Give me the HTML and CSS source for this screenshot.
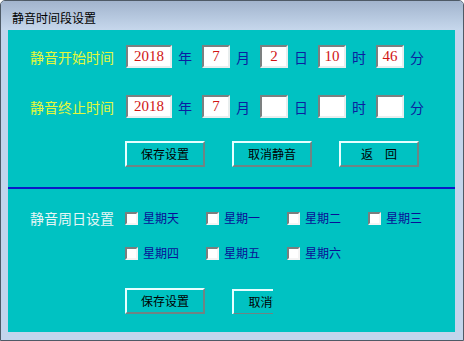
FILE: index.html
```html
<!DOCTYPE html>
<html lang="zh-CN">
<head>
<meta charset="utf-8">
<title>静音时间段设置</title>
<link rel="stylesheet" href="styles.css">
</head>
<body>
<div class="window">
  <div class="titlebar">静音时间段设置</div>
  <div class="client">
    <div class="time-row">
      <span class="label label-start">静音开始时间</span>
      <input class="field field-year" type="text" value="2018"><span class="unit">年</span>
      <input class="field" type="text" value="7"><span class="unit">月</span>
      <input class="field" type="text" value="2"><span class="unit">日</span>
      <input class="field" type="text" value="10"><span class="unit">时</span>
      <input class="field" type="text" value="46"><span class="unit">分</span>
    </div>
    <div class="time-row">
      <span class="label label-start">静音终止时间</span>
      <input class="field field-year" type="text" value="2018"><span class="unit">年</span>
      <input class="field" type="text" value="7"><span class="unit">月</span>
      <input class="field" type="text" value=""><span class="unit">日</span>
      <input class="field" type="text" value=""><span class="unit">时</span>
      <input class="field" type="text" value=""><span class="unit">分</span>
    </div>
    <div class="btn-row">
      <button class="btn">保存设置</button>
      <button class="btn">取消静音</button>
      <button class="btn">返　回</button>
    </div>
    <div class="divider"></div>
    <div class="week">
      <span class="label label-week">静音周日设置</span>
      <label class="day"><input type="checkbox" class="check"><span>星期天</span></label>
      <label class="day"><input type="checkbox" class="check"><span>星期一</span></label>
      <label class="day"><input type="checkbox" class="check"><span>星期二</span></label>
      <label class="day"><input type="checkbox" class="check"><span>星期三</span></label>
      <label class="day day-first"><input type="checkbox" class="check"><span>星期四</span></label>
      <label class="day"><input type="checkbox" class="check"><span>星期五</span></label>
      <label class="day"><input type="checkbox" class="check"><span>星期六</span></label>
    </div>
    <div class="btn-row btn-row-bottom">
      <button class="btn">保存设置</button>
      <div class="clip"><button class="btn">取消静音</button></div>
    </div>
  </div>
</div>
</body>
</html>
```

FILE: styles.css
```css
html, body {
  margin: 0;
  padding: 0;
  background: #ffffff;
}

body {
  font-family: "Noto Sans CJK SC", "Noto Sans", sans-serif;
}

.window {
  width: 464px;
  height: 341px;
  box-sizing: border-box;
  border: 1px solid #4e5a66;
  border-radius: 5px 5px 0 0;
  background: #c3d5ec;
  overflow: hidden;
  display: flex;
  flex-direction: column;
}

.titlebar {
  height: 29px;
  box-sizing: border-box;
  padding: 10px 0 0 11px;
  font-size: 12px;
  line-height: 14px;
  color: #000000;
  background: linear-gradient(to bottom, #a2b4cd 0%, #b4c6dd 50%, #c6d7ec 100%);
}

.client {
  margin: 0 8px 0 7px;
  height: 302px;
  background: #00c2c2;
  display: flex;
  flex-direction: column;
  padding-top: 15px;
  box-sizing: border-box;
}

.time-row {
  display: flex;
  align-items: center;
  height: 23px;
  padding-left: 22px;
}

.time-row + .time-row {
  margin-top: 27px;
}

.label {
  width: 96px;
  font-size: 14px;
  line-height: 20px;
  white-space: nowrap;
}

.label-start {
  color: #e4f83a;
}

.label-week {
  color: #e6f6f6;
  width: auto;
}

.field {
  width: 28px;
  height: 23px;
  box-sizing: border-box;
  margin: 0;
  padding: 0;
  border: 2px solid;
  border-color: #7c8080 #e8eeee #e8eeee #7c8080;
  background: #ffffff;
  color: #d01414;
  font-family: "Liberation Serif", serif;
  font-size: 15px;
  text-align: center;
  outline: none;
}

.field-year {
  width: 46px;
}

.unit {
  width: 14px;
  margin: 0 10px 0 6px;
  font-size: 14px;
  line-height: 20px;
  color: #0c1ea0;
}

.btn-row {
  display: flex;
  gap: 27px;
  padding-left: 117px;
  margin-top: 23px;
}

.btn {
  width: 80px;
  height: 26px;
  box-sizing: border-box;
  margin: 0;
  padding: 0;
  border: 2px solid;
  border-color: #e6ffff #6e8484 #6e8484 #e6ffff;
  background: #00c2c2;
  color: #000000;
  font-family: "Noto Sans CJK SC", "Noto Sans", sans-serif;
  font-size: 12px;
  line-height: 20px;
}

.divider {
  margin-top: 20px;
  height: 2px;
  background: #0a18c8;
}

.week {
  margin-top: 19px;
  padding-left: 22px;
  display: grid;
  grid-template-columns: 95px repeat(4, 81px);
  grid-auto-rows: 20px;
  row-gap: 15px;
  align-items: center;
}

.day-first {
  grid-column: 2;
}

.day {
  display: flex;
  align-items: center;
  gap: 5px;
  font-size: 12px;
  line-height: 16px;
  color: #0a0e96;
  white-space: nowrap;
}

.check {
  appearance: none;
  -webkit-appearance: none;
  width: 13px;
  height: 13px;
  margin: 0;
  box-sizing: border-box;
  border: 2px solid;
  border-color: #7a7e7e #f4f4f4 #f4f4f4 #7a7e7e;
  background: #ffffff;
  flex: none;
}

.btn-row-bottom {
  margin-top: 25px;
}

.clip {
  width: 41px;
  height: 26px;
  overflow: hidden;
  flex: none;
}

.clip .btn {
  width: 81px;
}
```
